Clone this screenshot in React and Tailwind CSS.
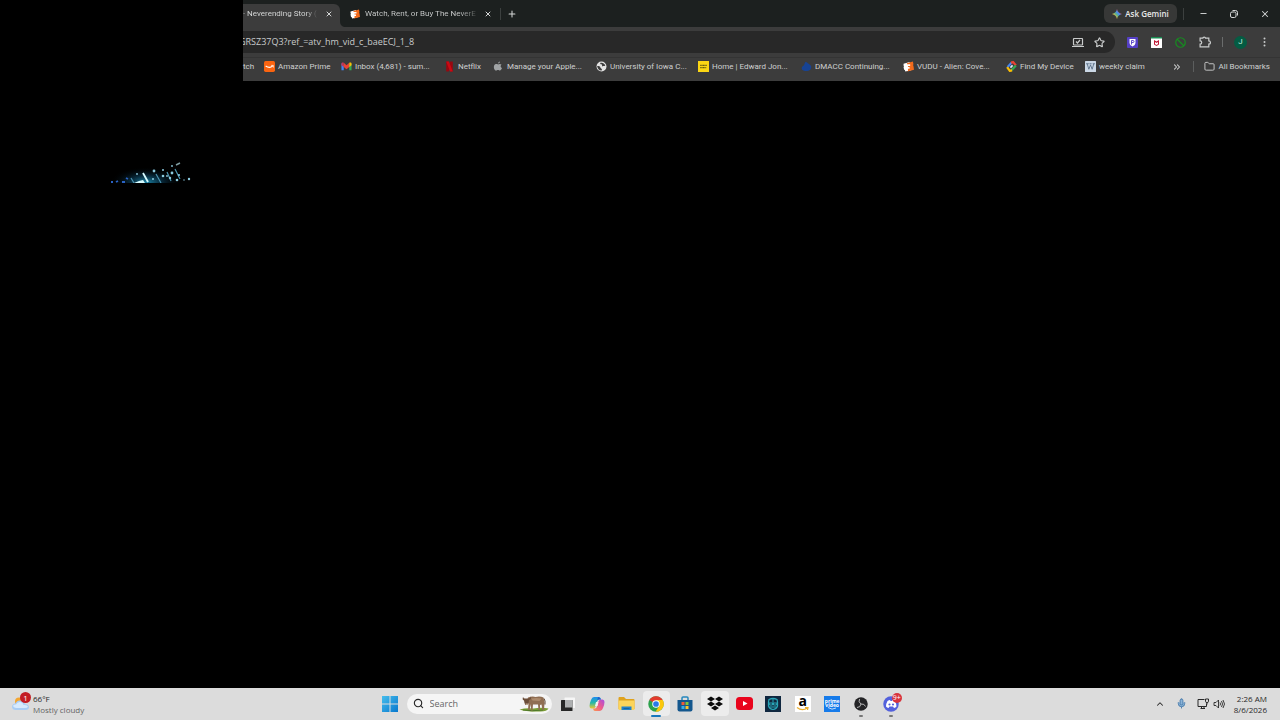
import React from 'react';
import { X, Plus, Minus, Star, Search, Folder, ChevronUp, ChevronsRight, Mic } from 'lucide-react';

const FandangoIcon = ({ className }) => (
  <svg viewBox="0 0 20 20" className={className}>
    <path d="M1 5 12 2l3 15-11 2c1-2-1-3-2-3l-1-5c1-1 1-2 0-3z" fill="#fff" />
    <path d="m7 4 11-3 1 5c-1 1-1 2 0 3l1 7-12 3z" fill="#f26a1b" />
    <path d="M2 6h11v3H9v2h3v3H9v4H4z" fill="#fff" />
  </svg>
);

const GeminiIcon = ({ className }) => (
  <svg viewBox="0 0 20 20" className={className}>
    <defs>
      <linearGradient id="gem" x1="0" y1="1" x2="1" y2="0">
        <stop offset="0.25" stopColor="#f5be3b" />
        <stop offset="0.45" stopColor="#5fb08a" />
        <stop offset="0.6" stopColor="#478bf3" />
        <stop offset="0.8" stopColor="#e85252" />
      </linearGradient>
    </defs>
    <path d="M10 0c1.500 6 4 8.500 10 10-6 1.500-8.500 4-10 10C8.500 14 6 11.500 0 10 6 8.500 8.500 6 10 0z" fill="url(#gem)" />
  </svg>
);

const PrimeSmile = ({ className }) => (
  <svg viewBox="0 0 20 20" className={className}>
    <rect width="20" height="20" rx="3" fill="#fa6410" />
    <path d="M3 9q7 5 13 0" fill="none" stroke="#fff" strokeWidth="2" />
    <path d="M13 8h4v4" fill="none" stroke="#fff" strokeWidth="1.300" />
  </svg>
);

const GmailIcon = ({ className }) => (
  <svg viewBox="0 0 24 20" className={className}>
    <path d="M1 3v15h5V8z" fill="#4285f4" />
    <path d="M18 8v10h5V3z" fill="#34a853" />
    <path d="M1 4c0-3 3-3 5-2v9L1 7z" fill="#c5365b" />
    <path d="m6 2 6 5 6-5v9l-6 5-6-5z" fill="#ea4335" />
    <path d="M18 2c2-1 5-1 5 2v3l-5 4z" fill="#fbbc04" />
  </svg>
);

const NetflixIcon = ({ className }) => (
  <svg viewBox="0 0 20 20" className={className}>
    <path d="M4 1h5v18H4z" fill="#99070f" />
    <path d="M11 1h5v18h-5z" fill="#99070f" />
    <path d="M4 1h5l7 18h-5z" fill="#cc0913" />
  </svg>
);

const AppleIcon = ({ className }) => (
  <svg viewBox="0 0 22 22" className={className} fill="#a0a3a5">
    <path d="M14 1c0 2-2 4-4 4 0-2 2-4 4-4zM17 7c-3 2-2 6 1 7-1 3-3 5-4 5-2 0-2-1-4-1s-2 1-4 1C3 19 1 14 2 10c1-4 5-5 8-3 3-2 5-1 7 0z" />
  </svg>
);

const GlobeIcon = ({ className }) => (
  <svg viewBox="0 0 20 20" className={className}>
    <circle cx="10" cy="10" r="9" fill="#e3e3e3" />
    <path d="M2 9c3 0 6 0 6 3 0 2 3 1 3 5-5 1-8-3-9-8zM8 3c3 0 8 1 9 5-2 2-4 0-5 2-2-1 0-3-2-4-2 0-3-1-2-3z" fill="#3c3c3c" />
  </svg>
);

const EdwardIcon = ({ className }) => (
  <svg viewBox="0 0 20 20" className={className}>
    <rect width="20" height="20" fill="#fbd614" />
    <path d="M4 8h12M4 12h11" stroke="#6b6010" strokeWidth="2" strokeDasharray="2 0.500" />
  </svg>
);

const DmaccIcon = ({ className }) => (
  <svg viewBox="0 0 20 20" className={className}>
    <path d="M9 2c3 0 3 3 6 4 4 2 5 6 2 10-4 3-11 3-15 0-2-3 0-7 3-8 2-1 1-6 4-6z" fill="#174393" />
  </svg>
);

const FindIcon = ({ className }) => (
  <svg viewBox="0 0 20 20" className={className} fill="none" strokeWidth="4">
    <path d="m3 11 7-8" stroke="#4285f4" />
    <path d="m9 3 4-1 5 6" stroke="#ea4335" />
    <path d="m18 8-8 9" stroke="#34a853" />
    <path d="m11 17-4 1-5-7" stroke="#fbbc04" />
    <path d="m8 12 4-4" stroke="#dfe9fc" strokeWidth="3" />
  </svg>
);

const WeeklyIcon = ({ className }) => (
  <svg viewBox="0 0 20 20" className={className}>
    <rect width="20" height="20" rx="1" fill="#cbd8e6" />
    <path d="M2 5h5M8 5h4M14 5h4M4 5l3 10 3-8 3 8 3-10" fill="none" stroke="#50667e" strokeWidth="1.500" />
  </svg>
);

const bookmarks = [
  { label: 'Amazon Prime', icon: PrimeSmile, width: 'w-[77px]' },
  { label: 'Inbox (4,681) - sum...', icon: GmailIcon, width: 'w-[103px]' },
  { label: 'Netflix', icon: NetflixIcon, width: 'w-[49px]' },
  { label: 'Manage your Apple...', icon: AppleIcon, width: 'w-[103px]' },
  { label: 'University of Iowa C...', icon: GlobeIcon, width: 'w-[102px]' },
  { label: 'Home | Edward Jon...', icon: EdwardIcon, width: 'w-[103px]' },
  { label: 'DMACC Continuing...', icon: DmaccIcon, width: 'w-[102px]' },
  { label: 'VUDU - Alien: Cove...', icon: FandangoIcon, width: 'w-[103px]' },
  { label: 'Find My Device', icon: FindIcon, width: 'w-[79px]' },
  { label: 'weekly claim', icon: WeeklyIcon, width: 'w-[65px]' },
];

function TabStrip() {
  return (
    <div className="flex h-[27px] items-center bg-[#1c201f] text-[#d5d7d7]">
      <div className="flex h-full w-[97px] items-center pt-1">
        <div className="flex h-full flex-1 items-center rounded-tr-md bg-[#3c3c3c] pr-[7px] pb-1">
          <button className="whitespace-nowrap text-left">
            <span className="bg-linear-to-r from-[#dfe1e1] from-85% to-[#4c4c4c] bg-clip-text text-transparent">· Neverending Story (</span>
          </button>
          <button aria-label="Close tab" className="ml-auto">
            <X className="size-2" strokeWidth={3} />
          </button>
        </div>
      </div>
      <svg viewBox="0 0 6 6" className="size-1.5 self-end">
        <path d="M0 0c0 4 2 6 6 6H0z" fill="#3c3c3c" />
      </svg>
      <div className="flex w-[146px] items-center pl-1">
        <FandangoIcon className="mr-[5px] size-2.5 shrink-0" />
        <button className="whitespace-nowrap text-left">
          <span className="bg-linear-to-r from-[#cfd1d1] from-85% to-[#4c4f4e] bg-clip-text text-transparent">Watch, Rent, or Buy The NeverE</span>
        </button>
        <button aria-label="Close tab" className="ml-auto">
          <X className="size-2" strokeWidth={3} />
        </button>
      </div>
      <div className="ml-2 h-3 w-px bg-[#3c403f]" />
      <button aria-label="New tab" className="ml-1.5">
        <Plus className="size-2.5" strokeWidth={2.5} />
      </button>
      <button className="ml-auto flex h-[19px] w-[73px] items-center justify-center gap-[3px] rounded-md bg-[#373837] font-['Open_Sans',sans-serif] font-semibold text-[#e8e8e8]">
        <GeminiIcon className="size-2.5" />
        Ask Gemini
      </button>
      <div className="ml-1.5 h-3 w-px bg-[#3c403f]" />
      <div className="flex w-[96px] items-center justify-end gap-[22px] pr-2.5">
        <button aria-label="Minimize">
          <Minus className="size-[9px]" strokeWidth={2.5} />
        </button>
        <button aria-label="Restore">
          <svg viewBox="0 0 16 16" className="size-2" fill="none" stroke="currentColor" strokeWidth="2">
            <rect x="1" y="4" width="11" height="11" rx="3" />
            <path d="M5 1h6q4 0 4 4v6" />
          </svg>
        </button>
        <button aria-label="Close window">
          <X className="size-2.5" strokeWidth={2.5} />
        </button>
      </div>
    </div>
  );
}

function Toolbar() {
  return (
    <div className="flex h-[30px] items-center pr-[13px] text-[#c9cbcb]">
      <div className="flex h-[22px] flex-1 items-center overflow-hidden rounded-r-full bg-[#282828] pr-2.5">
        <input
          aria-label="Address"
          readOnly
          value="GRSZ37Q3?ref_=atv_hm_vid_c_baeECJ_1_8"
          className="-ml-1 flex-1 bg-transparent font-['Open_Sans',sans-serif] text-[9px] outline-none"
        />
        <button aria-label="Install app" className="mr-2.5">
          <svg viewBox="0 0 24 22" className="h-[11px] w-3" fill="none" stroke="currentColor" strokeWidth="2.400">
            <rect x="3" y="3" width="18" height="13" rx="1" />
            <path d="M0 19h24M8 9l3 3 5-6" />
          </svg>
        </button>
        <button aria-label="Bookmark this tab">
          <Star className="size-[11px]" strokeWidth={2.5} />
        </button>
      </div>
      <div className="ml-3 flex items-center gap-[13px]">
        <button aria-label="Pass extension">
          <svg viewBox="0 0 22 22" className="size-[11px]">
            <rect width="22" height="22" rx="2" fill="#5540c5" />
            <path d="M5 4h12v8q0 4-6 7-6-3-6-7z" fill="#fff" />
            <path d="M9 15V7h3q2 0 2 2t-2 2H9" fill="none" stroke="#5540c5" strokeWidth="1.800" />
          </svg>
        </button>
        <button aria-label="Shield extension">
          <svg viewBox="0 0 22 22" className="size-[11px]">
            <rect width="22" height="22" rx="1" fill="#fff" />
            <path d="M0 0h22v3H0z" fill="#198c52" />
            <path d="M6 6 11 9l5-3v9l-5 3-5-3z" fill="#c01835" />
            <path d="m8 10 3 2 3-2v4l-3 2-3-2z" fill="#fff" />
          </svg>
        </button>
        <button aria-label="Blocker extension">
          <svg viewBox="0 0 22 22" className="size-[11px]" fill="none" stroke="#168c20" strokeWidth="2.400">
            <circle cx="11" cy="11" r="9.500" />
            <path d="m4 4 14 14" />
          </svg>
        </button>
        <button aria-label="Extensions">
          <svg viewBox="0 0 22 22" className="size-3" fill="none" stroke="currentColor" strokeWidth="2.200">
            <path d="M2 4h5q0-2 2.500-2T12 4h6v5q3 0 3 3t-3 3v5H2v-5q3 0 3-3T2 9z" />
          </svg>
        </button>
      </div>
      <div className="ml-[11px] h-2.5 w-px bg-[#6a6c6c]" />
      <button aria-label="Profile" className="ml-[11px] flex size-[13px] items-center justify-center rounded-full bg-[#045c43] text-[#c9ece0]">
        J
      </button>
      <button aria-label="Menu" className="ml-[15px]">
        <svg viewBox="0 0 10 20" className="h-2.5 w-[5px]" fill="currentColor">
          <circle cx="5" cy="3" r="2" />
          <circle cx="5" cy="10" r="2" />
          <circle cx="5" cy="17" r="2" />
        </svg>
      </button>
    </div>
  );
}

function BookmarksBar() {
  return (
    <nav className="flex h-[24px] items-center whitespace-nowrap border-t border-[#343434] pb-1.5 text-[#cfd0d0]">
      <a href="#twitch" className="w-[21px]">tch</a>
      {bookmarks.map(({ label, icon: Icon, width }) => (
        <a key={label} href="#bookmark" className={`flex shrink-0 items-center gap-[3px] ${width}`}>
          <Icon className="size-[11px] shrink-0" />
          {label}
        </a>
      ))}
      <button aria-label="More bookmarks" className="ml-auto">
        <ChevronsRight className="size-2.5" strokeWidth={2.5} />
      </button>
      <div className="ml-[11px] h-[11px] w-px bg-[#5c5e5e]" />
      <button className="ml-2.5 mr-2.5 flex items-center gap-[3px]">
        <Folder className="size-[11px]" strokeWidth={2} />
        All Bookmarks
      </button>
    </nav>
  );
}

function VideoWindow() {
  return (
    <div className="flex h-[183px] w-[243px] shrink-0 items-end justify-end bg-black pr-[33px]">
      <svg viewBox="0 0 120 45" className="h-[45px] w-[120px]">
        <defs>
          <radialGradient id="glow">
            <stop offset="0" stopColor="#1c86a8" />
            <stop offset="0.45" stopColor="#0b3f5b" stopOpacity="0.6" />
            <stop offset="1" stopColor="#000" stopOpacity="0" />
          </radialGradient>
          <filter id="soft">
            <feGaussianBlur stdDeviation="0.4" />
          </filter>
        </defs>
        <ellipse cx="56" cy="44" rx="36" ry="15" fill="url(#glow)" />
        <g filter="url(#soft)">
          <path d="M44 45l5-2 4-1 2 3z" fill="#d5fbff" />
          <path d="m41 40 3 5M66 36l5 9M77 34l4 9M85 31l5 10" stroke="#4b93b0" strokeWidth="1.200" />
          <path d="m53 35 5 9" stroke="#d6fbff" strokeWidth="1.800" />
          <path d="M21 44h2M26 44l2-1M36 40l2 1M32 44h3" stroke="#2c62c5" strokeWidth="1.800" />
          <g fill="#8ccbe0">
            <circle cx="64" cy="33" r="1.400" />
            <circle cx="47" cy="36" r="0.900" />
            <circle cx="73" cy="32" r="1" />
            <circle cx="73" cy="38" r="1.300" />
            <circle cx="77" cy="38" r="0.900" />
            <circle cx="82" cy="28" r="0.900" />
            <circle cx="82" cy="35" r="1.400" />
            <circle cx="80" cy="40" r="1.200" />
            <circle cx="87" cy="42" r="1.300" />
            <circle cx="89" cy="37" r="1.100" />
            <circle cx="99" cy="41" r="1.200" />
            <circle cx="63" cy="41" r="1" />
            <circle cx="94" cy="42" r="0.700" />
          </g>
          <path d="m86 27 4-2" stroke="#7f9da2" strokeWidth="1.400" />
        </g>
      </svg>
    </div>
  );
}

const TaskViewIcon = () => (
  <svg viewBox="0 0 32 32" className="size-4">
    <rect x="9" y="3" width="21" height="21" rx="1" fill="#f6f6f6" />
    <rect x="2" y="8" width="23" height="22" rx="1" fill="#262626" />
    <path d="M10 8h15v15H10z" fill="#aeb0b1" />
  </svg>
);

const CopilotIcon = () => (
  <svg viewBox="0 0 32 32" className="size-4">
    <defs>
      <linearGradient id="copA" x1="0" y1="0" x2="0" y2="1">
        <stop offset="0" stopColor="#1e8df0" />
        <stop offset="0.5" stopColor="#27b8a7" />
        <stop offset="1" stopColor="#f3c930" />
      </linearGradient>
      <linearGradient id="copB" x1="1" y1="0" x2="0" y2="1">
        <stop offset="0" stopColor="#a64de4" />
        <stop offset="0.5" stopColor="#ee5b8b" />
        <stop offset="1" stopColor="#fa994c" />
      </linearGradient>
    </defs>
    <path d="M10 2h10q3 0 4 5h-4q-3 0-4 4l-3 10q-1 4-5 4H5q-4 0-4-5 0-5 3-12 2-6 6-6z" fill="url(#copA)" />
    <path d="M22 30H12q-3 0-4-5h4q3 0 4-4l3-10q1-4 5-4h3q4 0 4 5 0 5-3 12-2 6-6 6z" fill="url(#copB)" />
    <path d="M18 2q5 0 6 5h-4q-3 0-4 4z" fill="#205dc9" />
    <path d="M14 12h5l-2 8h-5z" fill="#f2f2f2" />
  </svg>
);

const ExplorerIcon = () => (
  <svg viewBox="0 0 34 30" className="h-[15px] w-[17px]">
    <path d="M1 4q0-2 2-2h9l4 4h15q2 0 2 2v18H1z" fill="#dfa21d" />
    <path d="M1 9h32v17q0 2-2 2H3q-2 0-2-2z" fill="#fcd45b" />
    <path d="M7 21h20v7H7z" fill="#2382ca" />
    <path d="M11 25h12" stroke="#17588f" strokeWidth="1.500" />
  </svg>
);

const ChromeIcon = () => (
  <svg viewBox="0 0 32 32" className="size-4">
    <circle cx="16" cy="16" r="15.500" fill="#2ca24c" />
    <path d="M16 16 2.600 8.200A15.500 15.500 0 0 1 29.400 8.200H16z" fill="#e33b2e" />
    <path d="M29.400 8.200A15.500 15.500 0 0 1 15 31.500l7.800-12L16 8.200z" fill="#fdc70c" />
    <circle cx="16" cy="16" r="7.500" fill="#fff" />
    <circle cx="16" cy="16" r="5.700" fill="#2b79e8" />
  </svg>
);

const StoreIcon = () => (
  <svg viewBox="0 0 32 32" className="size-4">
    <path d="M10 9V4q0-2 2-2h8q2 0 2 2v5" fill="none" stroke="#2587bd" strokeWidth="3" />
    <path d="M1 8h30v19q0 4-4 4H5q-4 0-4-4z" fill="#14578d" />
    <path d="M9 12h6v6H9z" fill="#f05a36" />
    <path d="M17 12h6v6h-6z" fill="#81c53c" />
    <path d="M9 20h6v6H9z" fill="#35aee9" />
    <path d="M17 20h6v6h-6z" fill="#fac52d" />
  </svg>
);

const DropboxIcon = () => (
  <svg viewBox="0 0 32 30" className="h-[15px] w-4" fill="#0b0b0b">
    <path d="m8 1 8 5-8 5-8-5zM24 1l8 5-8 5-8-5zM8 11l8 5-8 5-8-5zM24 11l8 5-8 5-8-5zM16 19l8 5-8 5-8-5z" />
  </svg>
);

const YoutubeIcon = () => (
  <svg viewBox="0 0 34 26" className="h-[13px] w-[17px]">
    <rect width="34" height="26" rx="7" y="0" fill="#e9041c" />
    <path d="m14 8 9 5-9 5z" fill="#fff" />
  </svg>
);

const GuardIcon = () => (
  <svg viewBox="0 0 32 32" className="size-4">
    <rect width="32" height="32" fill="#10273f" />
    <path d="M8 7q8-4 16 0l1 5v8q-2 6-9 7-7-1-9-7v-8z" fill="none" stroke="#29a6b8" strokeWidth="2.500" />
    <path d="M8 14h7v4H9zM17 14h7l-1 4h-6zM10 22h12M16 6v8" fill="none" stroke="#29a6b8" strokeWidth="2" />
  </svg>
);

const AmazonIcon = () => (
  <div className="flex size-4 flex-col items-center bg-white">
    <span className="h-[11px] font-['Open_Sans',sans-serif] text-[14px] leading-[10px] font-bold text-black">a</span>
    <svg viewBox="0 0 26 8" className="h-1 w-[13px]" fill="none" stroke="#eab132" strokeWidth="2.500">
      <path d="M2 1q10 8 21 1M18 1h6l-1 5" />
    </svg>
  </div>
);

const PrimeVideoIcon = () => (
  <div className="flex size-4 flex-col items-center bg-[#167bea] pt-[3px] text-[5px] leading-[4px] font-bold text-white">
    <span>prime</span>
    <span>video</span>
    <svg viewBox="0 0 20 6" className="h-[3px] w-2.5" fill="none" stroke="#fff" strokeWidth="1.500">
      <path d="M2 1q8 6 16 1" />
    </svg>
  </div>
);

const ObsIcon = () => (
  <svg viewBox="0 0 28 28" className="size-3.5">
    <circle cx="14" cy="14" r="13.500" fill="#242426" />
    <g fill="none" stroke="#b5b5b6" strokeWidth="2">
      <path d="M11 4q-3 6 3 10" />
      <path d="M14 14q7-1 9 5" />
      <path d="M14 14q-1 7-8 7" />
    </g>
  </svg>
);

const DiscordIcon = () => (
  <div className="relative">
    <svg viewBox="0 0 32 32" className="size-4">
      <circle cx="16" cy="16" r="15.500" fill="#5361dc" />
      <path d="M9 10q3-2 5-2l1 2h3l1-2q3 0 5 2 3 6 3 11-2 2-5 3l-2-3h-7l-2 3q-3-1-5-3 0-6 3-11z" fill="#fff" />
      <circle cx="13" cy="17" r="2.200" fill="#5361dc" />
      <circle cx="20" cy="17" r="2.200" fill="#5361dc" />
    </svg>
    <span className="absolute -top-[3px] -right-[3px] flex size-2.5 items-center justify-center rounded-full bg-[#d8333d] text-[7px] text-white">9+</span>
  </div>
);

const apps = [
  { name: 'Task view', icon: TaskViewIcon },
  { name: 'Copilot', icon: CopilotIcon },
  { name: 'File Explorer', icon: ExplorerIcon },
  { name: 'Chrome', icon: ChromeIcon, tile: true, bar: 'w-2.5 bg-[#1877bd]' },
  { name: 'Store', icon: StoreIcon },
  { name: 'Dropbox', icon: DropboxIcon, tile: true },
  { name: 'YouTube', icon: YoutubeIcon },
  { name: 'Guard', icon: GuardIcon },
  { name: 'Amazon', icon: AmazonIcon },
  { name: 'Prime Video', icon: PrimeVideoIcon },
  { name: 'OBS', icon: ObsIcon, bar: 'w-1 bg-[#777]' },
  { name: 'Discord', icon: DiscordIcon, bar: 'w-1 bg-[#777]' },
];

const WeatherIcon = () => (
  <div className="relative">
    <svg viewBox="0 0 34 34" className="size-[17px]">
      <circle cx="14" cy="13" r="8" fill="#f3a632" />
      <path d="M8 30q-8 0-8-7 1-6 7-6 3-7 10-6 7 0 9 7 7 0 8 6 0 6-7 6z" fill="#a9cdf4" />
      <path d="M8 26q-5-1-6-4 1-4 6-3 3-6 9-5 5 1 6 6 7-1 9 3-1 3-6 3z" fill="#d8eafc" />
    </svg>
    <span className="absolute -top-[3px] -right-0.5 flex size-[11px] items-center justify-center rounded-full bg-[#c31c23] text-[8px] text-white">1</span>
  </div>
);

const CowIcon = () => (
  <svg viewBox="0 0 60 34" className="h-[17px] w-[30px]">
    <path d="M1 29q14-4 28-2 16-3 30 0-3 6-16 6-28 1-42-4z" fill="#7c9c35" />
    <path d="M8 30q18 3 40 0" stroke="#4f792a" strokeWidth="2" fill="none" />
    <path d="M18 5q9-3 15-1 9-2 16 1l2 11-1 14h-3l-2-11-3 1v10h-3l-1-11H28l-1 12h-3V18l-3 12h-3l1-13-3-6z" fill="#8f6d52" />
    <path d="M8 4q2 4 5 3h6q4 0 5-4 1 6-4 7l-1 7-3 3h-3l-2-4-1-5q-4-1-2-7z" fill="#6b4d39" />
    <path d="M13 17h5l-1 3h-3z" fill="#c0a48b" />
    <path d="M50 7q3 4 2 12" stroke="#5b4333" strokeWidth="2" fill="none" />
    <path d="M24 7q11-2 21 0l-4 5-14-1z" fill="#ad8b6d" />
  </svg>
);

function Taskbar() {
  return (
    <footer className="grid h-8 shrink-0 grid-cols-[1fr_auto_1fr] items-center bg-[#dcdcdc] pb-px text-[#292929]">
      <button className="flex items-center pl-3 text-left">
        <WeatherIcon />
        <span className="pl-1 leading-[11px]">
          66°F
          <br />
          <span className="text-[#646464]">Mostly cloudy</span>
        </span>
      </button>

      <div className="flex h-full items-center">
        <button aria-label="Start" className="flex w-8 pl-[7px]">
          <svg viewBox="0 0 32 32" className="size-4">
            <defs>
              <linearGradient id="win" x1="0" y1="0" x2="1" y2="1">
                <stop offset="0" stopColor="#46bdec" />
                <stop offset="1" stopColor="#0878ce" />
              </linearGradient>
            </defs>
            <path d="M0 0h15v15H0zM17 0h15v15H17zM0 17h15v15H0zM17 17h15v15H17z" fill="url(#win)" />
          </svg>
        </button>
        <label className="mr-0.5 flex h-5 w-[145px] items-center rounded-full bg-[#f5f5f5] pr-[3px] pl-1.5">
          <Search className="size-[11px] shrink-0" strokeWidth={2.5} />
          <input
            type="search"
            aria-label="Search"
            placeholder="Search"
            className="ml-1.5 w-0 flex-1 bg-transparent text-[9px] outline-none placeholder:text-[#666]"
          />
          <CowIcon />
        </label>
        <div className="grid h-full w-[352px] grid-cols-12">
          {apps.map(({ name, icon: Icon, tile, bar }) => (
            <button
              key={name}
              aria-label={name}
              className={`relative mx-px my-[3px] flex items-center justify-center rounded-sm ${tile ? 'bg-[#ececec]' : ''}`}
            >
              <Icon />
              {bar && <span className={`absolute -bottom-px h-0.5 rounded-full ${bar}`} />}
            </button>
          ))}
        </div>
      </div>

      <div className="flex items-center justify-end pr-[13px]">
        <button aria-label="Show hidden icons" className="mr-[11px]">
          <ChevronUp className="size-2.5" strokeWidth={2.5} />
        </button>
        <button aria-label="Microphone" className="mr-2.5">
          <Mic className="size-[11px] text-[#467aaa]" fill="#8cb4d8" strokeWidth={2} />
        </button>
        <button aria-label="Network and volume" className="flex items-center gap-1">
          <svg viewBox="0 0 24 24" className="size-3" fill="none" stroke="currentColor" strokeWidth="2">
            <path d="M15 3H2v14h17v-6M7 21h9M9 17v4M14 17v4" />
            <path d="M17 2h6v5q0 2-3 2t-3-2zM20 9v4" />
          </svg>
          <svg viewBox="0 0 24 24" className="size-3" fill="none" stroke="currentColor" strokeWidth="1.800">
            <path d="M2 9h4l5-5v16l-5-5H2zM14 9q2 3 0 6M17 6q4 6 0 12M20 4q6 8 0 16" />
          </svg>
        </button>
        <time className="ml-[9px] text-right leading-[11px]">
          2:26 AM
          <br />
          8/6/2026
        </time>
      </div>
    </footer>
  );
}

export default function App() {
  return (
    <div className="flex h-screen flex-col overflow-hidden bg-black font-['Open_Sans','Noto_Sans',sans-serif] text-[8px] leading-[12px]">
      <main className="flex flex-1 items-start">
        <VideoWindow />
        <div className="min-w-0 flex-1 bg-[#3c3c3c] font-['Roboto',sans-serif]">
          <TabStrip />
          <Toolbar />
          <BookmarksBar />
        </div>
      </main>
      <Taskbar />
    </div>
  );
}
